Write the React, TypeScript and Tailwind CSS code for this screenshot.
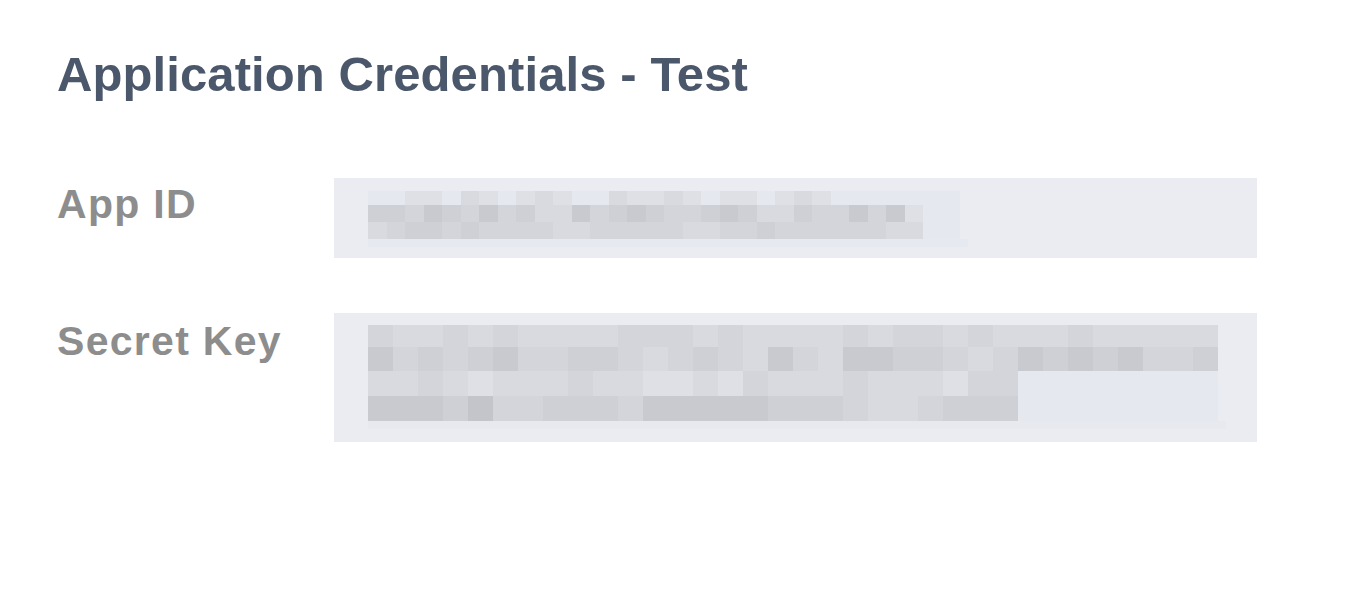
const shades = [
  "bg-[#c4c5cb]",
  "bg-[#c9cacf]",
  "bg-[#ced0d5]",
  "bg-[#d4d5da]",
  "bg-[#d9dadf]",
  "bg-[#dfe0e6]",
  "bg-[#e6e8ef]",
];

// blurred (pixelated) secret values, one digit per block
const appIdRows = [
  { h: "h-[14px]", cells: "66556456545664554565565456666666" },
  { h: "h-[17px]", cells: "22312313244132123321244233131566" },
  { h: "h-[17px]", cells: "43223233334433333443323333334466" },
];

const secretRows = [
  { h: "h-[22px]", cells: "3443434444333434444343343444344444" },
  { h: "h-[24px]", cells: "1323213322343234134112234312121332" },
  { h: "h-[25px]", cells: "4434544434455453444344453366666666" },
  { h: "h-[25px]", cells: "1112033222311111222344322266666666" },
];

function Pixelated({
  rows,
  cell,
}: {
  rows: { h: string; cells: string }[];
  cell: string;
}) {
  return (
    <div className="flex flex-col">
      {rows.map((row, i) => (
        <div key={i} className={`flex ${row.h}`}>
          {row.cells.split("").map((c, j) => (
            <div key={j} className={`${cell} h-full ${shades[Number(c)]}`} />
          ))}
        </div>
      ))}
    </div>
  );
}

export default function App() {
  return (
    <div className="min-h-screen bg-white pl-[57px] pt-[50px] font-['Liberation_Sans',Arial,sans-serif]">
      <h1 className="text-[49px] leading-none font-bold tracking-[0.1px] text-[#4b576b]">
        Application Credentials - Test
      </h1>

      <div className="mt-[79px] flex flex-col gap-[55px]">
        <div className="flex items-start">
          <div className="w-[277px] pt-[6px] text-[41px] leading-none font-bold tracking-[1.3px] text-[#8d8d8d]">
            App ID
          </div>
          <div className="w-[923px] h-[80px] bg-[#ebecf2] pl-[34px] pt-[13px]">
            <Pixelated rows={appIdRows} cell="w-[18.5px]" />
            <div className="h-[8px] w-[600px] bg-[#e7e9f0]" />
          </div>
        </div>

        <div className="flex items-start">
          <div className="w-[277px] pt-[8px] text-[41px] leading-none font-bold tracking-[1.3px] text-[#8d8d8d]">
            Secret Key
          </div>
          <div className="w-[923px] h-[129px] bg-[#ebecf2] pl-[34px] pt-[12px]">
            <Pixelated rows={secretRows} cell="w-[25px]" />
            <div className="h-[8px] w-[858px] bg-[#e8e9ef]" />
          </div>
        </div>
      </div>
    </div>
  );
}
